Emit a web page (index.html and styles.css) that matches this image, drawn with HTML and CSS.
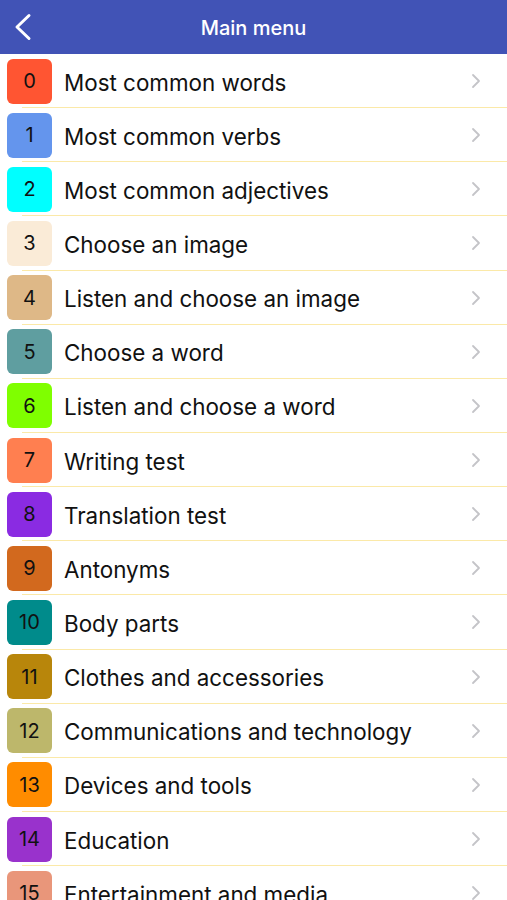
FILE: index.html
```html
<!DOCTYPE html>
<html>
	<head>
		<meta charset="utf-8">
		<meta name="viewport" content="width=device-width,initial-scale=1.0">
		<title>Main menu</title>
		<link rel="stylesheet" href="styles.css">
	</head>
	<body>
		<header class="bar">
			<a class="back" href="#">
				<svg width="22" height="30" viewBox="0 0 22 30"><path d="M17 2.5 L5 14 L17 25.5" fill="none" stroke="#fff" stroke-width="3" stroke-linecap="round" stroke-linejoin="round"/></svg>
			</a>
			<h1 class="title">Main menu</h1>
		</header>
		<ul class="menu">
			<li class="item"><span class="num c0">0</span><span class="label">Most common words</span><svg class="arrow" width="10" height="16" viewBox="0 0 10 16"><path d="M2 2 L8 8 L2 14" fill="none" stroke="#c4c4c8" stroke-width="1.8" stroke-linecap="round" stroke-linejoin="round"/></svg></li>
			<li class="item"><span class="num c1">1</span><span class="label">Most common verbs</span><svg class="arrow" width="10" height="16" viewBox="0 0 10 16"><path d="M2 2 L8 8 L2 14" fill="none" stroke="#c4c4c8" stroke-width="1.8" stroke-linecap="round" stroke-linejoin="round"/></svg></li>
			<li class="item"><span class="num c2">2</span><span class="label">Most common adjectives</span><svg class="arrow" width="10" height="16" viewBox="0 0 10 16"><path d="M2 2 L8 8 L2 14" fill="none" stroke="#c4c4c8" stroke-width="1.8" stroke-linecap="round" stroke-linejoin="round"/></svg></li>
			<li class="item"><span class="num c3">3</span><span class="label">Choose an image</span><svg class="arrow" width="10" height="16" viewBox="0 0 10 16"><path d="M2 2 L8 8 L2 14" fill="none" stroke="#c4c4c8" stroke-width="1.8" stroke-linecap="round" stroke-linejoin="round"/></svg></li>
			<li class="item"><span class="num c4">4</span><span class="label">Listen and choose an image</span><svg class="arrow" width="10" height="16" viewBox="0 0 10 16"><path d="M2 2 L8 8 L2 14" fill="none" stroke="#c4c4c8" stroke-width="1.8" stroke-linecap="round" stroke-linejoin="round"/></svg></li>
			<li class="item"><span class="num c5">5</span><span class="label">Choose a word</span><svg class="arrow" width="10" height="16" viewBox="0 0 10 16"><path d="M2 2 L8 8 L2 14" fill="none" stroke="#c4c4c8" stroke-width="1.8" stroke-linecap="round" stroke-linejoin="round"/></svg></li>
			<li class="item"><span class="num c6">6</span><span class="label">Listen and choose a word</span><svg class="arrow" width="10" height="16" viewBox="0 0 10 16"><path d="M2 2 L8 8 L2 14" fill="none" stroke="#c4c4c8" stroke-width="1.8" stroke-linecap="round" stroke-linejoin="round"/></svg></li>
			<li class="item"><span class="num c7">7</span><span class="label">Writing test</span><svg class="arrow" width="10" height="16" viewBox="0 0 10 16"><path d="M2 2 L8 8 L2 14" fill="none" stroke="#c4c4c8" stroke-width="1.8" stroke-linecap="round" stroke-linejoin="round"/></svg></li>
			<li class="item"><span class="num c8">8</span><span class="label">Translation test</span><svg class="arrow" width="10" height="16" viewBox="0 0 10 16"><path d="M2 2 L8 8 L2 14" fill="none" stroke="#c4c4c8" stroke-width="1.8" stroke-linecap="round" stroke-linejoin="round"/></svg></li>
			<li class="item"><span class="num c9">9</span><span class="label">Antonyms</span><svg class="arrow" width="10" height="16" viewBox="0 0 10 16"><path d="M2 2 L8 8 L2 14" fill="none" stroke="#c4c4c8" stroke-width="1.8" stroke-linecap="round" stroke-linejoin="round"/></svg></li>
			<li class="item"><span class="num c10">10</span><span class="label">Body parts</span><svg class="arrow" width="10" height="16" viewBox="0 0 10 16"><path d="M2 2 L8 8 L2 14" fill="none" stroke="#c4c4c8" stroke-width="1.8" stroke-linecap="round" stroke-linejoin="round"/></svg></li>
			<li class="item"><span class="num c11">11</span><span class="label">Clothes and accessories</span><svg class="arrow" width="10" height="16" viewBox="0 0 10 16"><path d="M2 2 L8 8 L2 14" fill="none" stroke="#c4c4c8" stroke-width="1.8" stroke-linecap="round" stroke-linejoin="round"/></svg></li>
			<li class="item"><span class="num c12">12</span><span class="label">Communications and technology</span><svg class="arrow" width="10" height="16" viewBox="0 0 10 16"><path d="M2 2 L8 8 L2 14" fill="none" stroke="#c4c4c8" stroke-width="1.8" stroke-linecap="round" stroke-linejoin="round"/></svg></li>
			<li class="item"><span class="num c13">13</span><span class="label">Devices and tools</span><svg class="arrow" width="10" height="16" viewBox="0 0 10 16"><path d="M2 2 L8 8 L2 14" fill="none" stroke="#c4c4c8" stroke-width="1.8" stroke-linecap="round" stroke-linejoin="round"/></svg></li>
			<li class="item"><span class="num c14">14</span><span class="label">Education</span><svg class="arrow" width="10" height="16" viewBox="0 0 10 16"><path d="M2 2 L8 8 L2 14" fill="none" stroke="#c4c4c8" stroke-width="1.8" stroke-linecap="round" stroke-linejoin="round"/></svg></li>
			<li class="item"><span class="num c15">15</span><span class="label">Entertainment and media</span><svg class="arrow" width="10" height="16" viewBox="0 0 10 16"><path d="M2 2 L8 8 L2 14" fill="none" stroke="#c4c4c8" stroke-width="1.8" stroke-linecap="round" stroke-linejoin="round"/></svg></li>
		</ul>
	</body>
</html>
```
FILE: styles.css
```css
* {
	margin: 0;
	padding: 0;
	box-sizing: border-box;
}

body {
	font-family: Inter, "Liberation Sans", sans-serif;
	background: #fff;
	color: #111;
	overflow: hidden;
}

.bar {
	height: 54px;
	background: #4153b6;
	display: flex;
	align-items: center;
	justify-content: center;
	position: relative;
}

.back {
	position: absolute;
	left: 12px;
	top: 13px;
	display: block;
	line-height: 0;
}

.title {
	color: #fff;
	font-size: 20px;
	font-weight: 500;
	margin-top: 2px;
}

.menu {
	list-style: none;
}

.item {
	height: 54.15px;
	display: flex;
	align-items: center;
	padding: 0 26px 0 7px;
	position: relative;
}

.item::after {
	content: '';
	position: absolute;
	left: 22px;
	right: 0;
	bottom: 0;
	height: 1px;
	background: #fbe9a8;
}

.num {
	width: 45px;
	height: 45px;
	border-radius: 6px;
	display: flex;
	align-items: center;
	justify-content: center;
	font-size: 20px;
	color: #111;
	flex-shrink: 0;
}

.label {
	flex: 1;
	margin-left: 12px;
	font-size: 22.4px;
	white-space: nowrap;
	padding-top: 2px;
}

.arrow {
	flex-shrink: 0;
}

.c0 { background: #ff5532; }
.c1 { background: #6495ed; }
.c2 { background: #00ffff; }
.c3 { background: #faebd7; }
.c4 { background: #deb887; }
.c5 { background: #5f9ea0; }
.c6 { background: #7fff00; }
.c7 { background: #ff7f50; }
.c8 { background: #8a2be2; }
.c9 { background: #d2691e; }
.c10 { background: #008b8b; }
.c11 { background: #b8860b; }
.c12 { background: #bdb76b; }
.c13 { background: #ff8c00; }
.c14 { background: #9932cc; }
.c15 { background: #e9967a; }
```
